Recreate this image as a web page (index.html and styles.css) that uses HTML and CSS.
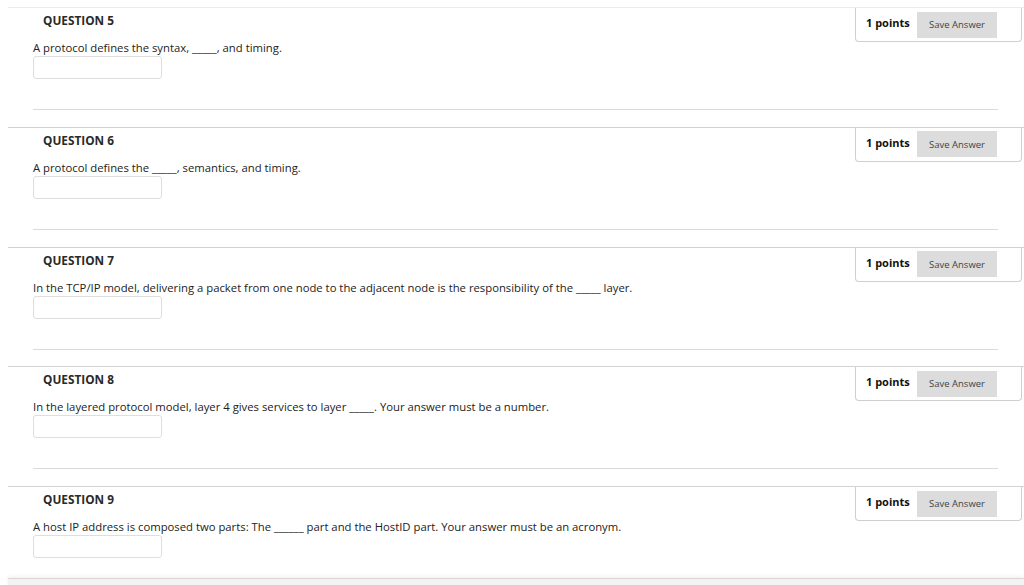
FILE: index.html
```html
<!DOCTYPE html>
<html lang="en">
<head>
<meta charset="utf-8">
<title>Quiz</title>
<link rel="stylesheet" href="styles.css">
</head>
<body>
<div class="page">
  <section class="q q--first">
    <div class="q-head">
      <h3 class="q-title">QUESTION 5</h3>
      <div class="points-box"><span class="points">1 points</span><button class="save">Save Answer</button></div>
    </div>
    <p class="q-text">A protocol defines the syntax, _____, and timing.</p>
    <input class="answer" type="text">
    <hr class="sep">
  </section>
  <section class="q">
    <div class="q-head">
      <h3 class="q-title">QUESTION 6</h3>
      <div class="points-box"><span class="points">1 points</span><button class="save">Save Answer</button></div>
    </div>
    <p class="q-text">A protocol defines the _____, semantics, and timing.</p>
    <input class="answer" type="text">
    <hr class="sep">
  </section>
  <section class="q">
    <div class="q-head">
      <h3 class="q-title">QUESTION 7</h3>
      <div class="points-box"><span class="points">1 points</span><button class="save">Save Answer</button></div>
    </div>
    <p class="q-text">In the TCP/IP model, delivering a packet from one node to the adjacent node is the responsibility of the _____ layer.</p>
    <input class="answer" type="text">
    <hr class="sep">
  </section>
  <section class="q">
    <div class="q-head">
      <h3 class="q-title">QUESTION 8</h3>
      <div class="points-box"><span class="points">1 points</span><button class="save">Save Answer</button></div>
    </div>
    <p class="q-text">In the layered protocol model, layer 4 gives services to layer _____. Your answer must be a number.</p>
    <input class="answer" type="text">
    <hr class="sep">
  </section>
  <section class="q q--last">
    <div class="q-head">
      <h3 class="q-title">QUESTION 9</h3>
      <div class="points-box"><span class="points">1 points</span><button class="save">Save Answer</button></div>
    </div>
    <p class="q-text">A host IP address is composed two parts: The ______ part and the HostID part. Your answer must be an acronym.</p>
    <input class="answer" type="text">
  </section>
  <div class="footer-bar"></div>
</div>
</body>
</html>
```

FILE: styles.css
```css
html, body {
  margin: 0;
  padding: 0;
  background: #fff;
}
body {
  font-family: "Open Sans", "Liberation Sans", Arial, sans-serif;
  color: #222;
  overflow: hidden;
}
.page {
  padding-top: 7px;
}
.q {
  margin-left: 8px;
  border-top: 1px solid #d2d2d2;
  padding-bottom: 16.75px;
}
.q--first {
  border-top-color: #ebebeb;
}
.q--last {
  padding-bottom: 20px;
}
.q-head {
  display: flex;
  align-items: flex-start;
  height: 31px;
}
.q-title {
  margin: 0;
  padding: 4px 0 0 35px;
  font-size: 11.8px;
  line-height: 16px;
  font-weight: 700;
  color: #2a2a2a;
}
.points-box {
  margin-left: auto;
  margin-right: 2px;
  box-sizing: border-box;
  height: 34px;
  width: 167px;
  padding: 3px 24px 3px 10px;
  display: flex;
  align-items: center;
  justify-content: space-between;
  border: 1px solid #cfcfcf;
  border-top: none;
  border-radius: 0 0 4px 4px;
  background: #fff;
  position: relative;
  z-index: 1;
}
.points {
  font-size: 11px;
  font-weight: 700;
  color: #111;
  line-height: 15px;
  margin-bottom: 4px;
}
.save {
  width: 80px;
  height: 26px;
  border: none;
  background: #dcdcdc;
  color: #444;
  font-family: inherit;
  font-size: 9.5px;
  padding: 0;
}
.q-text {
  margin: 0 0 0 25px;
  font-size: 11.3px;
  line-height: 17px;
  color: #222;
}
.answer {
  display: block;
  margin: 0 0 0 25px;
  box-sizing: border-box;
  width: 129px;
  height: 23px;
  border: 1px solid #dedede;
  border-radius: 3px;
  background: #fff;
  padding: 0;
}
.sep {
  margin: 30px 26px 0 25px;
  border: none;
  border-top: 1px solid #dadada;
  height: 0;
}
.footer-bar {
  margin-left: 8px;
  height: 20px;
  border-top: 1px solid #d6d6d6;
  background: #f3f3f3;
  box-shadow: 0 -2px 4px rgba(0, 0, 0, 0.05);
}
```
